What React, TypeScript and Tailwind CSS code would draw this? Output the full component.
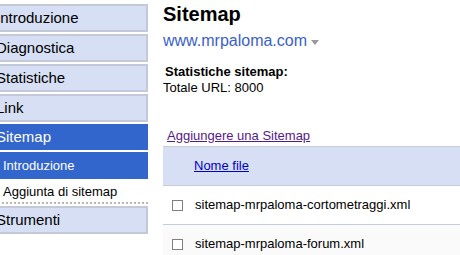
import React from "react";

const navBox =
  "flex items-center border-2 border-[#c3c9d8] bg-[#d6dff4] pl-[4px] text-[15px]";

function Sidebar() {
  return (
    <div className="-ml-[10px] flex w-[158px] shrink-0 flex-col gap-[2px] pt-[4px]">
      <div className={`${navBox} h-[28px]`}>Introduzione</div>
      <div className={`${navBox} h-[28px]`}>Diagnostica</div>
      <div className={`${navBox} h-[28px]`}>Statistiche</div>
      <div className={`${navBox} h-[28px]`}>Link</div>
      <div className="flex h-[26px] items-center bg-[#3366cc] pl-[6px] text-[15px] text-white">
        Sitemap
      </div>
      <div className="flex h-[27px] items-center bg-[#3366cc] pl-[13px] text-[13px] text-white">
        Introduzione
      </div>
      <div className="flex h-[23px] items-center border-b-2 border-dotted border-[#b8b8b8] pl-[13px] text-[13px]">
        Aggiunta di sitemap
      </div>
      <div className={`${navBox} h-[28px]`}>Strumenti</div>
    </div>
  );
}

function Checkbox() {
  return (
    <span className="block h-[11px] w-[11px] shrink-0 border border-[#808080] bg-white" />
  );
}

const files = [
  "sitemap-mrpaloma-cortometraggi.xml",
  "sitemap-mrpaloma-forum.xml",
];

export default function App() {
  return (
    <div className="flex h-[255px] w-[460px] overflow-hidden bg-white font-['Liberation_Sans',Arial,sans-serif] text-black">
      <Sidebar />
      <div className="ml-[15px] flex min-w-0 flex-1 flex-col pt-[2px]">
        <h1 className="text-[20px] font-bold leading-[24px]">Sitemap</h1>
        <div className="mt-[5px] flex items-center gap-[4px] text-[16px] leading-[20px] text-[#3b5fc9]">
          www.mrpaloma.com
          <span className="mt-[2px] h-0 w-0 border-x-[4px] border-t-[5px] border-x-transparent border-t-[#999]" />
        </div>
        <div className="mt-[13px] pl-[2px] text-[13px] font-bold leading-[16px]">
          Statistiche sitemap:
        </div>
        <div className="text-[13px] leading-[16px]">Totale URL: 8000</div>
        <a className="mt-[32px] pl-[4px] text-[13px] leading-[16px] text-[#551a8b] underline">
          Aggiungere una Sitemap
        </a>
        <div className="mt-[2px] w-[300px] text-[13px]">
          <div className="flex h-[39px] items-center border-t border-[#c6ccdb] bg-[#d6dff4] pl-[31px]">
            <a className="text-[#0000cc] underline">Nome file</a>
          </div>
          {files.map((f, i) => (
            <div
              key={f}
              className={`flex h-[39px] items-center gap-[12px] border-t border-[#c6ccdb] pl-[9px] ${
                i % 2 ? "bg-[#fafafa]" : "bg-white"
              }`}
            >
              <Checkbox />
              <span className="whitespace-nowrap">{f}</span>
            </div>
          ))}
        </div>
      </div>
    </div>
  );
}
